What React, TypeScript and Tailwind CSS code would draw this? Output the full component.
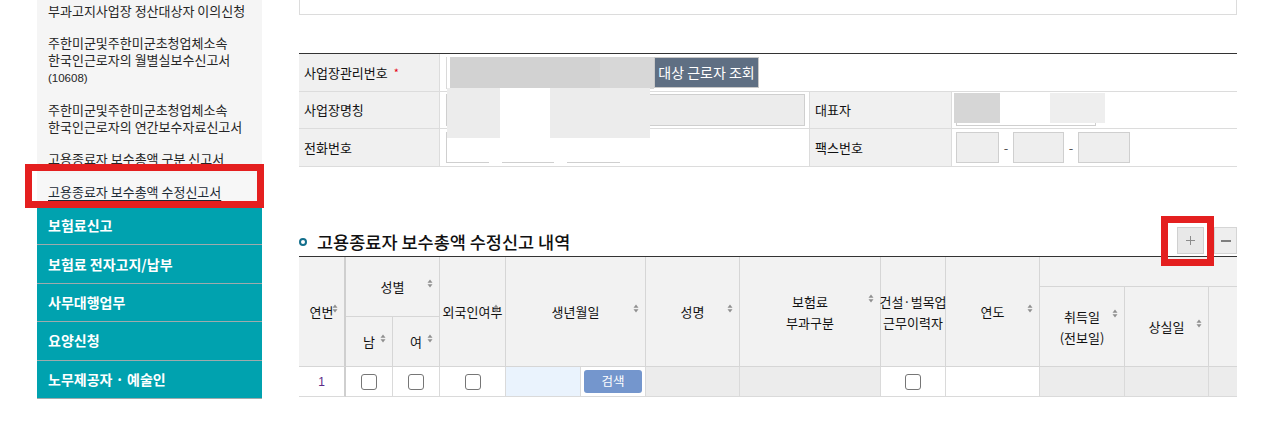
import React from "react";

function Sort({ two = false }: { two?: boolean }) {
  return (
    <svg
      width="6"
      height="9"
      viewBox="0 0 6 9"
      className={`absolute right-[6px] ${two ? "top-[calc(50%-18px)]" : "top-[calc(50%-8px)]"}`}
    >
      <path d="M0.5 3.7L3 0.6L5.5 3.7Z" fill="#8f8f8f" />
      <path d="M0.5 5.3L3 8.4L5.5 5.3Z" fill="#8f8f8f" />
    </svg>
  );
}

function Th({
  className = "",
  children,
  sort = true,
  two = false,
}: {
  className?: string;
  children?: React.ReactNode;
  sort?: boolean;
  two?: boolean;
}) {
  return (
    <div
      className={`relative flex items-center justify-center text-center bg-[#f2f2f2] border-b border-r border-[#d6d6d6] whitespace-nowrap leading-[21px] ${className}`}
    >
      <div>{children}</div>
      {sort && <Sort two={two} />}
    </div>
  );
}

function Box() {
  return <div className="w-[16px] h-[16px] border border-[#767676] rounded-[3px] bg-white" />;
}

function Td({ className = "", children }: { className?: string; children?: React.ReactNode }) {
  return (
    <div className={`flex items-center justify-center border-b border-r border-[#dadada] row-start-4 ${className}`}>
      {children}
    </div>
  );
}

export default function App() {
  return (
    <div className="w-[1262px] h-[438px] overflow-hidden bg-white flex pl-[37px] font-['Noto_Sans_CJK_KR','Noto_Sans',sans-serif] text-[#111]">
      {/* Sidebar */}
      <aside className="relative w-[225px] shrink-0">
        <div className="bg-[#f5f5f5] text-[#262626] text-[13px] leading-[17px]">
          <div className="px-[11px] pt-[1.5px] pb-[7.5px] whitespace-nowrap">부과고지사업장 정산대상자 이의신청</div>
          <div className="px-[11px] pt-[7.5px] pb-[6.5px] whitespace-nowrap">
            주한미군및주한미군초청업체소속
            <br />
            한국인근로자의 월별실보수신고서
            <br />
            <span className="text-[11.5px] font-['Liberation_Sans',sans-serif]">(10608)</span>
          </div>
          <div className="px-[11px] py-[7.5px] whitespace-nowrap">
            주한미군및주한미군초청업체소속
            <br />
            한국인근로자의 연간보수자료신고서
          </div>
          <div className="px-[11px] py-[7.5px] whitespace-nowrap">고용종료자 보수총액 구분 신고서</div>
          <div className="px-[11px] pt-[8.5px] pb-[7.5px] bg-[#f7f7f7] whitespace-nowrap">
            <span className="underline underline-offset-[3px] text-[#1d2b36]">고용종료자 보수총액 수정신고서</span>
          </div>
        </div>
        <div className="bg-[#00a2af] text-white font-bold text-[14px]">
          {["보험료신고", "보험료 전자고지/납부", "사무대행업무", "요양신청", "노무제공자 · 예술인"].map((t) => (
            <div key={t} className="h-[38.4px] flex items-center pl-[11px] border-b border-[#9eaaac]">
              {t}
            </div>
          ))}
        </div>
        <div className="absolute left-[-12px] top-[164px] w-[239px] h-[44px] border-[7px] border-[#e41f1f] pointer-events-none" />
      </aside>

      <div className="w-[37px] shrink-0" />

      {/* Main */}
      <main className="w-[938px] shrink-0">
        <div className="h-[15px] border-x border-b border-[#dcdcdc]" />

        {/* Form */}
        <div className="relative mt-[38px] border-t border-[#333] text-[13px]">
          <div className="flex h-[38px] border-b border-[#dcdcdc]">
            <div className="w-[141px] shrink-0 bg-[#f0f0f0] border-r border-[#dcdcdc] flex items-center pl-[5px] whitespace-nowrap">
              사업장관리번호<span className="ml-[6px] text-[#e60012] text-[11px]">*</span>
            </div>
            <div className="flex items-center pl-[6px]">
              <div className="flex h-[32px] border-l border-[#d9d9d9] pl-[3px]">
                <div className="w-[150px] bg-[#d2d2d2]" />
                <div className="w-[54px] bg-[#d7d7d7]" />
              </div>
              <div className="h-[31px] w-[105px] bg-[#5f6f83] text-white text-[14px] border border-[#c8c8c8] flex items-center justify-center whitespace-nowrap">
                대상 근로자 조회
              </div>
            </div>
          </div>

          <div className="flex h-[37px] border-b border-[#dcdcdc]">
            <div className="w-[141px] shrink-0 bg-[#f0f0f0] border-r border-[#dcdcdc] flex items-center pl-[5px]">
              사업장명칭
            </div>
            <div className="w-[369px] shrink-0 flex items-center pl-[6px]">
              <div className="w-[359px] h-[32px] border border-[#cfcfcf] bg-[#ececec]" />
            </div>
            <div className="w-[143px] shrink-0 bg-[#f0f0f0] border-x border-[#dcdcdc] flex items-center pl-[5px]">
              대표자
            </div>
            <div className="flex-1 flex items-center pl-[4px]">
              <div className="w-[140px] h-[32px] border border-[#cfcfcf] bg-white" />
            </div>
          </div>

          <div className="flex h-[38px] border-b border-[#dcdcdc]">
            <div className="w-[141px] shrink-0 bg-[#f0f0f0] border-r border-[#dcdcdc] flex items-center pl-[5px]">
              전화번호
            </div>
            <div className="w-[369px] shrink-0 flex items-center pl-[6px]">
              <div className="w-[43px] h-[31px] border border-[#cfcfcf] bg-white" />
              <div className="w-[13px] text-center">-</div>
              <div className="w-[52px] h-[31px] border border-[#cfcfcf] bg-white" />
              <div className="w-[13px] text-center">-</div>
              <div className="w-[53px] h-[31px] border border-[#cfcfcf] bg-white" />
            </div>
            <div className="w-[143px] shrink-0 bg-[#f0f0f0] border-x border-[#dcdcdc] flex items-center pl-[5px]">
              팩스번호
            </div>
            <div className="flex-1 flex items-center pl-[4px] text-[#555]">
              <div className="w-[43px] h-[31px] border border-[#cfcfcf] bg-[#eeeeee]" />
              <div className="w-[14px] text-center">-</div>
              <div className="w-[51px] h-[31px] border border-[#cfcfcf] bg-[#eeeeee]" />
              <div className="w-[14px] text-center">-</div>
              <div className="w-[52px] h-[31px] border border-[#cfcfcf] bg-[#eeeeee]" />
            </div>
          </div>

          {/* redaction overlays */}
          <div className="absolute left-[148px] top-[34px] w-[53px] h-[50px] bg-[#ececec]" />
          <div className="absolute left-[201px] top-[34px] w-[50px] h-[50px] bg-white" />
          <div className="absolute left-[251px] top-[34px] w-[100px] h-[50px] bg-[#ececec]" />
          <div className="absolute left-[148px] top-[84px] w-[193px] h-[24px] bg-white" />
          <div className="absolute left-[655px] top-[39px] w-[46px] h-[30px] bg-[#d6d6d6]" />
          <div className="absolute left-[701px] top-[39px] w-[50px] h-[30px] bg-white" />
          <div className="absolute left-[751px] top-[39px] w-[55px] h-[30px] bg-[#eeeeee]" />
        </div>

        {/* Section title */}
        <div className="mt-[60px] h-[29px] flex items-center justify-between">
          <div className="flex items-center">
            <span className="ml-[0px] w-[8px] h-[8px] rounded-full border-2 border-[#136f8c]" />
            <span className="ml-[10px] text-[17.5px] font-medium text-[#111] leading-none whitespace-nowrap">
              고용종료자 보수총액 수정신고 내역
            </span>
          </div>
          <div className="self-start flex gap-[10px]">
            <div className="relative">
              <div className="w-[27px] h-[27px] bg-[#e8e8e8] border border-[#d0d0d0] flex items-center justify-center">
                <svg width="9" height="9" viewBox="0 0 9 9">
                  <path d="M4.5 0V9M0 4.5H9" stroke="#8c8c8c" strokeWidth="1" />
                </svg>
              </div>
              <div className="absolute left-[-16px] top-[-11px] w-[53px] h-[50px] border-[7px] border-[#e41f1f] z-10 pointer-events-none" />
            </div>
            <div className="w-[23px] h-[27px] bg-[#eeeeee] border border-[#d5d5d5] flex items-center justify-center">
              <svg width="10" height="2" viewBox="0 0 10 2">
                <path d="M0 1H10" stroke="#7f7f7f" strokeWidth="2" />
              </svg>
            </div>
          </div>
        </div>

        {/* Table */}
        <div className="border-t border-[#333] overflow-hidden text-[13px]">
          <div className="grid grid-cols-[47px_47px_47px_66px_75px_65px_94px_141px_65px_94px_85px_84px_120px] grid-rows-[30px_30px_50px_30px]">
            <Th className="col-start-1 row-start-1 row-span-3 !border-r-2 border-r-[#cfcfcf]">연번</Th>
            <Th className="col-start-2 col-span-2 row-start-1 row-span-2">성별</Th>
            <Th className="col-start-2 row-start-3">남</Th>
            <Th className="col-start-3 row-start-3">여</Th>
            <Th className="col-start-4 row-start-1 row-span-3">외국인여부</Th>
            <Th className="col-start-5 col-span-2 row-start-1 row-span-3">생년월일</Th>
            <Th className="col-start-7 row-start-1 row-span-3">성명</Th>
            <Th className="col-start-8 row-start-1 row-span-3" two>
              보험료
              <br />
              부과구분
            </Th>
            <Th className="col-start-9 row-start-1 row-span-3" sort={false}>
              건설·벌목업
              <br />
              근무이력자
            </Th>
            <Th className="col-start-10 row-start-1 row-span-3">연도</Th>
            <Th className="col-start-11 col-span-3 row-start-1" sort={false} />
            <Th className="col-start-11 row-start-2 row-span-2" two>
              취득일
              <br />
              (전보일)
            </Th>
            <Th className="col-start-12 row-start-2 row-span-2">상실일</Th>
            <Th className="col-start-13 row-start-2 row-span-2" sort={false} />

            <Td className="col-start-1 !border-r-2 border-r-[#cfcfcf] bg-white">
              <span className="text-[12px] text-[#5b2a86] font-['Liberation_Sans',sans-serif]">1</span>
            </Td>
            <Td className="col-start-2 bg-white">
              <Box />
            </Td>
            <Td className="col-start-3 bg-white">
              <Box />
            </Td>
            <Td className="col-start-4 bg-white">
              <Box />
            </Td>
            <Td className="col-start-5 bg-[#eaf3fd]" />
            <Td className="col-start-6 bg-white">
              <div className="w-[58px] h-[23px] rounded-[3px] bg-[#7496cd] text-white text-[12.5px] flex items-center justify-center">
                검색
              </div>
            </Td>
            <Td className="col-start-7 bg-[#ececec]" />
            <Td className="col-start-8 bg-[#ececec]" />
            <Td className="col-start-9 bg-white">
              <Box />
            </Td>
            <Td className="col-start-10 bg-white" />
            <Td className="col-start-11 bg-[#ececec]" />
            <Td className="col-start-12 bg-[#ececec]" />
            <Td className="col-start-13 bg-[#ececec]" />
          </div>
        </div>
      </main>
    </div>
  );
}
